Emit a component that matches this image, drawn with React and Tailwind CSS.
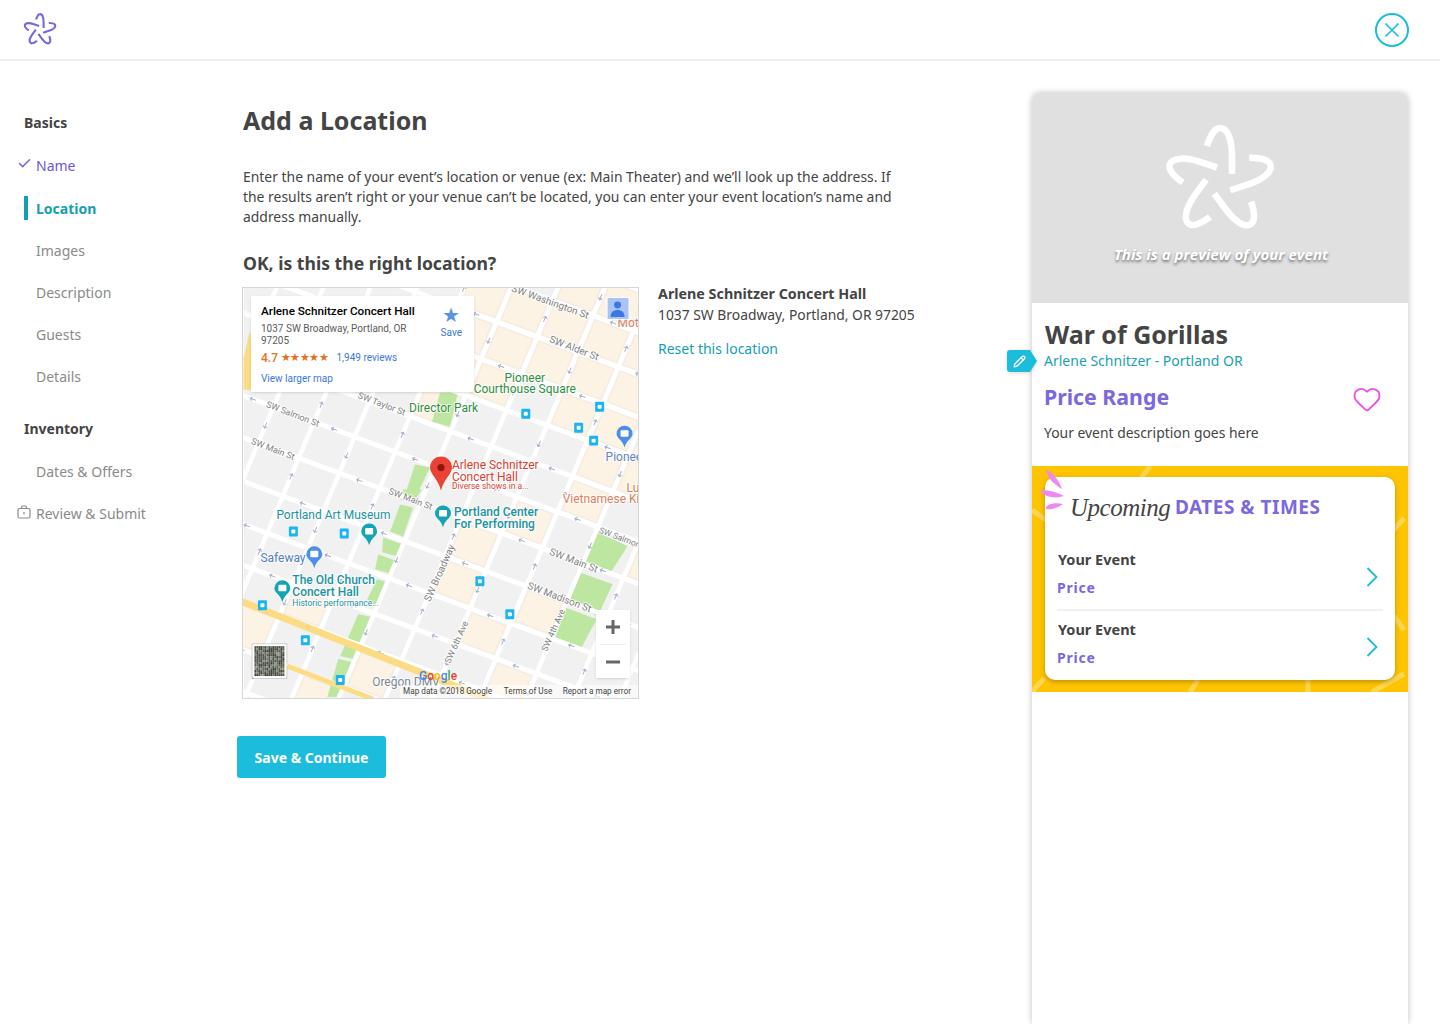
import React from 'react';
import { Check, Pencil, Heart } from 'lucide-react';

const sans = { fontFamily: '"Noto Sans", "Open Sans", sans-serif' };

// street grid of the map: y = SLOPE_S * x + b, x = a - SLOPE_A * y
const SLOPE_S = 0.37;
const SLOPE_A = 0.42;
const STREETS = [-145, -102, -60, -17, 25, 67, 108, 150, 194, 237, 278, 315, 363, 405];
const AVENUES = [33, 80, 127, 174, 221, 268, 315, 362, 409, 456, 503, 550, 597];

function corner(b, a) {
  const x = (a - SLOPE_A * b) / (1 + SLOPE_S * SLOPE_A);
  return [x, SLOPE_S * x + b];
}

function block(i, j, inset = 4) {
  const b0 = STREETS[i] + inset, b1 = STREETS[i + 1] - inset;
  const a0 = AVENUES[j] + inset, a1 = AVENUES[j + 1] - inset;
  return [corner(b0, a0), corner(b0, a1), corner(b1, a1), corner(b1, a0)].map(p => p.join(',')).join(' ');
}

// [street row, avenue column]
const PEACH = [
  [0,6],[0,7],[0,8],[0,9],[0,10],[0,11],[1,4],[1,5],[1,6],[1,7],[1,8],[1,9],[1,10],[1,11],
  [2,3],[2,4],[2,5],[2,6],[2,7],[2,8],[2,9],[2,10],[2,11],[3,2],[3,3],[3,4],[3,5],[3,7],[3,8],[3,9],[3,10],[3,11],
  [4,4],[4,8],[4,9],[4,10],[4,11],[5,8],[5,10],[5,11],[6,7],[6,10],
  [7,6],[8,6],[8,8],[9,7],[10,3],[10,8],[11,2],[11,5],[12,4],[12,6],[12,7],
];

const GREENS = [
  '197,105 215,105 207,139 189,134', '172,177 187,180 174,207 162,207', '160,202 179,202 170,215 157,212',
  '147,244 157,217 170,220 160,249', '140,250 160,257 154,269 139,265', '135,267 154,274 149,287 132,282',
  '134,292 145,295 134,322 124,312', '115,327 130,330 110,372 97,369', '95,372 109,375 97,410 84,410',
  '354,244 385,259 367,287 339,272', '334,284 370,297 355,329 325,315', '322,320 354,332 337,364 312,352',
];

const TRANSIT = [[357,119],[283,126],[336,140],[351,153],[50,244],[101,246],[237,294],[267,327],[19,318],[62,353],[97,393]];

const STREET_LABELS = [
  ['SW Washington St', 268, 3, 20, 10],
  ['SW Alder St', 306, 54, 21, 10],
  ['SW Taylor St', 114, 110, 21, 9],
  ['SW Salmon St', 22, 119, 21, 9],
  ['SW Main St', 7, 156, 21, 9],
  ['SW Main St', 145, 206, 21, 9],
  ['SW Main St', 306, 267, 21, 10],
  ['SW Salmon', 356, 245, 21, 8.5],
  ['SW Madison St', 284, 301, 21, 10],
  ['SW Broadway', 187, 315, -66, 10],
  ['SW 6th Ave', 207, 377, -66, 9],
  ['SW 4th Ave', 304, 365, -66, 9],
];

// tiny one way arrows sitting on the streets
function arrows() {
  const out = [];
  STREETS.forEach((b, i) => {
    AVENUES.forEach((a, j) => {
      if ((i + j) % 2) return;
      const [x0, y0] = corner(b, a);
      const [x1, y1] = corner(b, a + 47);
      out.push(<path key={`s${i}-${j}`} d="M-3 0H3M-1 -2L-3 0L-1 2" transform={`translate(${(x0 + x1) / 2} ${(y0 + y1) / 2}) rotate(20)`} stroke="#a6aecb" strokeWidth="1" fill="none" />);
    });
  });
  AVENUES.forEach((a, j) => {
    STREETS.forEach((b, i) => {
      if ((i + j) % 2 === 0) return;
      const [x0, y0] = corner(b, a);
      const [x1, y1] = corner(b + 43, a);
      out.push(<path key={`a${i}-${j}`} d="M-3 0H3M1 -2L3 0L1 2" transform={`translate(${(x0 + x1) / 2} ${(y0 + y1) / 2}) rotate(${j % 2 ? 113 : -67})`} stroke="#a6aecb" strokeWidth="1" fill="none" />);
    });
  });
  return out;
}

function Pin({ x, y, color, r = 9, tail = 12 }) {
  return (
    <g transform={`translate(${x} ${y})`}>
      <path d={`M${-r} 0A${r} ${r} 0 1 1 ${r} 0C${r} ${r * 0.6} 2 ${tail * 0.6} 0 ${tail + 4}C-2 ${tail * 0.6} ${-r} ${r * 0.6} ${-r} 0Z`} fill={color} />
      <rect x="-4" y="-3.5" width="8" height="6.5" rx="1" fill="#fff" />
    </g>
  );
}

function MapDrawing() {
  const satellite = [];
  for (let i = 0; i < 15; i++) {
    for (let j = 0; j < 15; j++) {
      const n = Math.sin(i * 12.9898 + j * 78.233) * 43758.5453;
      const v = Math.floor((n - Math.floor(n)) * 5);
      satellite.push(<rect key={`${i}-${j}`} x={11 + i * 2} y={359 + j * 2} width="2" height="2" fill={['#4d5346', '#6f7566', '#3b3f38', '#8a8f80', '#575c50'][v]} />);
    }
  }
  const halo = { paintOrder: 'stroke', stroke: '#fff', strokeWidth: 2, strokeOpacity: 0.8 };
  return (
    <svg viewBox="0 0 396 412" className="block w-[396px] h-[411px]" style={{ fontFamily: 'Roboto, sans-serif' }}>
      <rect width="396" height="412" fill="#f1f1f1" />
      {PEACH.map(([i, j]) => <polygon key={`${i}-${j}`} points={block(i, j)} fill="#fcf3e4" stroke="#fbe6cf" strokeWidth="0.6" />)}
      {GREENS.map(p => <polygon key={p} points={p} fill="#bde7a0" />)}
      {STREETS.map(b => <line key={b} x1="-10" y1={b - 3.7} x2="410" y2={b + 151.7} stroke="#fff" strokeWidth="5" />)}
      {AVENUES.map(a => <line key={a} x1={a + 4.2} y1="-10" x2={a - 176.4} y2="420" stroke="#fff" strokeWidth="4.5" />)}
      {arrows()}
      <line x1="-10" y1="311" x2="245" y2="412" stroke="#fbdc84" strokeWidth="7" />
      <line x1="44" y1="379" x2="130" y2="412" stroke="#fbdc84" strokeWidth="5" />
      <polygon points="0,70 6,45 9,45 9,102 0,102" fill="#fbdc84" />
      {TRANSIT.map(([x, y]) => (
        <g key={`${x}-${y}`} transform={`translate(${x} ${y})`}>
          <rect x="-4.5" y="-5" width="9" height="10" rx="1" fill="#18b4f4" />
          <rect x="-2" y="-2" width="4" height="4" rx="1" fill="#fff" />
        </g>
      ))}
      {STREET_LABELS.map(([t, x, y, r, s]) => (
        <text key={t + x} x={x} y={y} fontSize={s} fill="#7f7f7f" style={halo} transform={`rotate(${r} ${x} ${y})`}>{t}</text>
      ))}
      <g fill="#d8412f" fontSize="12" style={halo}>
        <text x="209" y="181">Arlene Schnitzer</text>
        <text x="209" y="193">Concert Hall</text>
        <text x="209" y="201.5" fontSize="8.5">Diverse shows in a...</text>
      </g>
      <g fill="#2f8f3e" fontSize="12" style={halo}>
        <text x="282" y="94" textAnchor="middle">Pioneer</text>
        <text x="282" y="105" textAnchor="middle">Courthouse Square</text>
        <text x="166" y="124">Director Park</text>
      </g>
      <g fill="#1a93a2" fontSize="12" style={halo}>
        <text x="33" y="232">Portland Art Museum</text>
        <text x="211" y="229" fontWeight="500">Portland Center</text>
        <text x="211" y="241" fontWeight="500">For Performing</text>
        <text x="49" y="297" fontWeight="500">The Old Church</text>
        <text x="49" y="309" fontWeight="500">Concert Hall</text>
        <text x="49" y="319" fontSize="8.5">Historic performance...</text>
      </g>
      <g fontSize="12" style={halo}>
        <text x="17" y="275" fill="#4f7fc4">Safeway</text>
        <text x="320" y="216" fill="#d9805f">Vietnamese Ki</text>
        <text x="363" y="173" fill="#5d86c8">Pioneer</text>
        <text x="375" y="39" fill="#d9805f">Mot</text>
        <text x="384" y="204" fill="#d9805f">Lu</text>
        <text x="129" y="399" fill="#7c8791">Oregon DMV</text>
      </g>
      <Pin x={382} y={146} color="#4b8fe8" r={8} tail={10} />
      <Pin x={126} y={244} color="#14a5b5" r={8} tail={10} />
      <Pin x={200} y={226} color="#14a5b5" r={8} tail={10} />
      <Pin x={71} y={267} color="#4b8fe8" r={8} tail={10} />
      <Pin x={39} y={301} color="#14a5b5" r={8} tail={10} />
      <g transform="translate(198 180)">
        <path d="M-11 0A11 11 0 1 1 11 0C11 7 3 11 0 23C-3 11 -11 7 -11 0Z" fill="#ea4335" />
        <circle r="3.6" fill="#8f1410" />
      </g>
      <rect x="157" y="398" width="239" height="14" fill="#fff" fillOpacity="0.6" />
      <text x="176" y="393" fontSize="12" fontWeight="500">
        <tspan fill="#4285f4">G</tspan><tspan fill="#ea4335">o</tspan><tspan fill="#fbbc05">o</tspan><tspan fill="#4285f4">g</tspan><tspan fill="#34a853">l</tspan><tspan fill="#ea4335">e</tspan>
      </text>
      <g fontSize="8.2" fill="#444">
        <text x="160" y="406.500">Map data ©2018 Google</text>
        <text x="261" y="406.500">Terms of Use</text>
        <text x="320" y="406.500">Report a map error</text>
      </g>
      <rect x="8" y="356" width="36" height="36" rx="1" fill="#000" fillOpacity="0.15" />
      <rect x="9" y="357" width="34" height="34" rx="1" fill="#fff" />
      {satellite}
      <rect x="364" y="9" width="23" height="23" fill="#fff" fillOpacity="0.8" />
      <rect x="365" y="10" width="21" height="21" fill="#a8c4f7" />
      <circle cx="375" cy="17" r="3.5" fill="#3b78e0" />
      <path d="M368 29c0-5 3-7 7-7s7 2 7 7z" fill="#3b78e0" />
    </svg>
  );
}

function StarLogo({ className, color, width }) {
  return (
    <svg viewBox="-60 -60 120 120" className={className} fill="none" stroke={color} strokeWidth={width} strokeLinecap="butt">
      {[0, 72, 144, 216, 288].map(r => (
        <path key={r} transform={`rotate(${r})`} d="M-13 -35C-9 -48 -4 -53 0 -53C8 -53 12 -40 12 -25L12 -7" />
      ))}
    </svg>
  );
}

function NavItem({ children }) {
  return <div className="pl-3 h-[42px] flex items-center text-[14px] text-[#8a8a8a]">{children}</div>;
}

function SideNav() {
  return (
    <aside className="w-[243px] shrink-0 pl-6 pt-[49px]">
      <div className="h-6 flex items-center text-[14px] font-bold text-[#444]">Basics</div>
      <div className="relative pl-3 mt-[19px] h-[24px] flex items-center text-[14px] text-[#6c54dc]">
        <Check className="absolute left-[-7px] top-[3px] w-[15px] h-[15px]" strokeWidth={2.5} color="#7b68dd" />
        Name
      </div>
      <div className="mt-[19px] h-6 border-l-4 border-[#139eb3] pl-2 flex items-center text-[14px] font-bold text-[#139eb3]">Location</div>
      <div className="mt-[9px]">
        <NavItem>Images</NavItem>
        <NavItem>Description</NavItem>
        <NavItem>Guests</NavItem>
        <NavItem>Details</NavItem>
      </div>
      <div className="mt-[19px] h-6 flex items-center text-[14px] font-bold text-[#444]">Inventory</div>
      <div className="mt-[10px]">
        <NavItem>Dates &amp; Offers</NavItem>
        <div className="relative">
          <svg viewBox="0 0 14 14" className="absolute left-[-7px] top-[13px] w-[14px] h-[14px]" fill="none" stroke="#8a8a8a" strokeWidth="1.2">
            <rect x="1" y="3.500" width="12" height="9.500" rx="1.500" />
            <path d="M4.500 3.500V2.500a1.500 1.500 0 0 1 1.500-1.500h2a1.500 1.500 0 0 1 1.500 1.500v1" />
            <path d="M7 7v2.500" />
          </svg>
          <NavItem>Review &amp; Submit</NavItem>
        </div>
      </div>
    </aside>
  );
}

function MainColumn() {
  return (
    <main className="flex-1 pt-[41px] text-[#444]">
      <h1 className="text-[25px] leading-9 font-bold">Add a Location</h1>
      <p className="mt-[29px] w-[670px] text-[13.920px] leading-5">
        Enter the name of your event’s location or venue (ex: Main Theater) and we’ll look up the address. If the results aren’t right or your venue can’t be located, you can enter your event location’s name and address manually.
      </p>
      <h2 className="mt-[22px] text-[17.600px] leading-7 font-bold">OK, is this the right location?</h2>
      <div className="mt-[10px] flex items-start">
        <div className="relative -ml-px w-[397px] h-[412px] border border-[#d6d6d6] overflow-hidden shrink-0" style={{ fontFamily: 'Roboto, sans-serif' }}>
          <MapDrawing />
          <div className="absolute left-2 top-2 w-[223px] h-[96px] bg-white shadow-sm px-[10px] pt-2 text-[10px] leading-[12px] text-[#5b5b5b]">
            <div className="flex justify-between">
              <div className="w-[160px]">
                <div className="text-[11.700px] leading-[14px] font-medium text-black whitespace-nowrap">Arlene Schnitzer Concert Hall</div>
                <div className="mt-[5px]">1037 SW Broadway, Portland, OR 97205</div>
                <div className="mt-[5px] flex items-center whitespace-nowrap">
                  <span className="text-[12px] font-medium text-[#e7711b]">4.7</span>
                  <span className="ml-[3px] text-[10.500px] tracking-[-0.5px] text-[#e7711b]">★★★★★</span>
                  <span className="ml-[8px] text-[#3b78e0]">1,949 reviews</span>
                </div>
                <div className="mt-[9px] text-[#3b78e0]">View larger map</div>
              </div>
              <div className="flex flex-col items-center pr-[2px] mt-[1px]">
                <span className="text-[20px] leading-[20px] text-[#5b93e6]">★</span>
                <span className="mt-[2px] text-[#3b78e0]">Save</span>
              </div>
            </div>
          </div>
          <div className="absolute left-[353px] top-[322px] w-[34px] h-[68px] bg-white shadow-sm flex flex-col items-center text-[#666]">
            <svg viewBox="0 0 34 34" className="w-[34px] h-[34px]" fill="none" stroke="currentColor" strokeWidth="3">
              <path d="M17 10v14M10 17h14" />
            </svg>
            <div className="w-[26px] h-px bg-[#eee]" />
            <svg viewBox="0 0 34 33" className="w-[34px] h-[33px]" fill="none" stroke="currentColor" strokeWidth="3">
              <path d="M10 17h14" />
            </svg>
          </div>
        </div>
        <div className="ml-[19px] text-[13.850px]">
          <div className="leading-5 mt-[-3px] font-bold text-[#444] text-[14.300px]">Arlene Schnitzer Concert Hall</div>
          <div className="leading-5 mt-[1px]">1037 SW Broadway, Portland, OR 97205</div>
          <div className="mt-[14px] leading-5 text-[14px] text-[#139eb3]">Reset this location</div>
        </div>
      </div>
      <button className="mt-[37px] -ml-1.5 w-[149px] h-[42px] rounded-[3px] bg-[#1bbcdc] text-white text-[14px] font-bold">Save &amp; Continue</button>
    </main>
  );
}

function EventRow({ last }) {
  return (
    <div className={`relative mx-3 ${last ? 'h-[63px]' : 'h-[70px]'}`}>
      {!last && <div className="absolute left-0 right-0 top-[62px] h-0.5 bg-[#f0f0f0]" />}
      <div className="absolute left-[1px] top-[2px] text-[14.500px] leading-5 font-bold text-[#444]">Your Event</div>
      <div className="absolute left-0 top-[31px] text-[14px] leading-5 font-bold tracking-[0.8px] text-[#7b68dd]">Price</div>
      <svg viewBox="0 0 12 20" className="absolute right-[5px] top-[20px] w-3 h-5" fill="none" stroke="#1bbcdc" strokeWidth="1.8">
        <path d="M1.500 1L10.500 10L1.500 19" />
      </svg>
    </div>
  );
}

function Preview() {
  return (
    <aside className="relative w-[376px] mr-8 mt-8 shrink-0 rounded-t-lg bg-white shadow-[0_0_6px_rgba(0,0,0,0.25)] text-[#444]">
      <div className="h-[210px] rounded-t-lg bg-[#e0e0e0] flex flex-col items-center pt-[28px]">
        <StarLogo className="w-[120px] h-[120px]" color="#fff" width="6.5" />
        <div className="mt-[3px] ml-[2px] text-[15px] leading-5 font-bold italic text-white [text-shadow:0_2px_3px_rgba(0,0,0,0.5)]" style={{ fontFamily: '"Open Sans", sans-serif' }}>This is a preview of your event</div>
      </div>
      <div className="relative h-[163px] px-3 pt-[13px]">
        <div className="absolute -left-[25px] top-[47px] flex items-center drop-shadow-sm">
          <div className="w-[23px] h-[22px] rounded-l-[3px] bg-[#1bbcdc] flex items-center justify-end">
            <Pencil className="w-[13px] h-[13px] mr-[4px]" color="#fff" strokeWidth={2.5} />
          </div>
          <div className="w-0 h-0 border-y-[11px] border-y-transparent border-l-[7px] border-l-[#1bbcdc]" />
        </div>
        <div className="ml-px text-[25px] leading-9 font-bold">War of Gorillas</div>
        <div className="-mt-[1px] text-[14px] leading-5 text-[#1a9fb5]">Arlene Schnitzer - Portland OR</div>
        <div className="mt-[10px] h-8 flex items-center justify-between">
          <div className="text-[21.300px] leading-8 font-bold text-[#7b68dd]">Price Range</div>
          <Heart className="w-[30px] h-[30px] mr-[14px] translate-y-[2px]" color="#ea4fee" strokeWidth={1.5} />
        </div>
        <div className="mt-[10px] text-[13.900px] leading-5">Your event description goes here</div>
      </div>
      <div className="relative h-[226px] bg-[#ffc400] px-[13px] pt-[11px] overflow-hidden">
        <svg viewBox="0 0 376 226" className="absolute inset-0 w-[376px] h-[226px]" fill="none" stroke="#fff" strokeOpacity="0.3" strokeWidth="5">
          <path d="M118 0L108 14M0 44L14 54M372 52L358 68M362 150L372 164M158 226L166 214M276 226V212M0 226L12 212M340 226L372 208" />
        </svg>
        <div className="relative h-[203px] rounded-[10px] bg-white shadow-[0_2px_5px_rgba(0,0,0,0.25)]">
          <div className="relative h-[70px]">
            <span className="absolute left-[25px] top-[11px] text-[25px] leading-10 italic tracking-[-0.5px] text-[#444]" style={{ fontFamily: '"Liberation Serif", serif' }}>Upcoming</span>
            <span className="absolute left-[130px] top-[16px] text-[19px] leading-7 font-bold tracking-[0.5px] text-[#7b68dd] whitespace-nowrap">DATES &amp; TIMES</span>
          </div>
          <EventRow />
          <EventRow last />
        </div>
        <svg viewBox="0 0 30 42" className="absolute left-[8px] top-[3px] w-[30px] h-[42px]" fill="#ee88f2">
          <path d="M6 1C11 2 18 9 22 20C15 16 8 10 6 1Z" />
          <path d="M0 22C6 20 16 23 24 27C15 30 5 28 0 22Z" />
          <path d="M6 42C5 37 15 35 23 37C18 41 11 43 6 42Z" transform="translate(0 -2)" />
        </svg>
      </div>
    </aside>
  );
}

export default function App() {
  return (
    <div className="h-[1024px] overflow-hidden bg-white flex flex-col" style={sans}>
      <header className="h-[61px] shrink-0 border-b-2 border-[#eee] flex items-center justify-between pl-[22px] pr-[31px]">
        <StarLogo className="w-9 h-9" color="#7468df" width="7" />
        <svg viewBox="0 0 34 34" className="w-[34px] h-[34px]" fill="none" stroke="#1bbcdc" strokeWidth="2">
          <circle cx="17" cy="17" r="16" />
          <path d="M10.500 10.500L23.500 23.500M23.500 10.500L10.500 23.500" strokeWidth="1.6" />
        </svg>
      </header>
      <div className="flex flex-1 min-h-0">
        <SideNav />
        <MainColumn />
        <Preview />
      </div>
    </div>
  );
}
